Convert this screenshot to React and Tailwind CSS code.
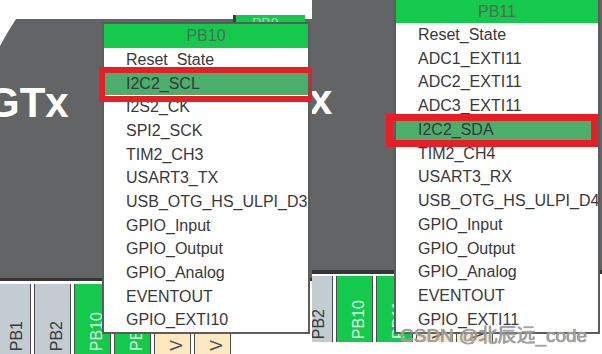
const leftItems = [
  "Reset_State",
  "I2C2_SCL",
  "I2S2_CK",
  "SPI2_SCK",
  "TIM2_CH3",
  "USART3_TX",
  "USB_OTG_HS_ULPI_D3",
  "GPIO_Input",
  "GPIO_Output",
  "GPIO_Analog",
  "EVENTOUT",
  "GPIO_EXTI10",
];

const rightItems = [
  "Reset_State",
  "ADC1_EXTI11",
  "ADC2_EXTI11",
  "ADC3_EXTI11",
  "I2C2_SDA",
  "TIM2_CH4",
  "USART3_RX",
  "USB_OTG_HS_ULPI_D4",
  "GPIO_Input",
  "GPIO_Output",
  "GPIO_Analog",
  "EVENTOUT",
  "GPIO_EXTI11",
];

const pinStyles = {
  gray: "bg-[#c3ccd1] text-[#3a3a3a]",
  green: "bg-[#14c94b] text-[#d9f7df]",
  beige: "bg-[#fce8c1] text-[#4a4a4a]",
};

const Pin = ({ label, kind }) => (
  <div
    className={`w-[37px] shrink-0 h-full border-x border-[#4a4a4a] flex flex-col justify-end items-center pl-2 pb-[3px] ${pinStyles[kind]}`}
  >
    <span className="[writing-mode:vertical-rl] rotate-180 text-[16px] leading-none">
      {label}
    </span>
  </div>
);

const Menu = ({ title, items, selected, rowH, headH, className }) => (
  <div
    className={`absolute bg-white border-2 border-[#5c5c5c] font-['Liberation_Sans',Arial,sans-serif] ${className}`}
  >
    <div
      className="bg-[#14c94b] text-[#4b6e55] text-[16px] flex items-center justify-center"
      style={{ height: headH }}
    >
      {title}
    </div>
    {items.map((it) => (
      <div
        key={it}
        className={`pl-[22px] text-[16px] text-[#383838] flex items-center whitespace-nowrap overflow-hidden ${
          it === selected ? "bg-[#4cae6c]" : ""
        }`}
        style={{ height: rowH }}
      >
        {it}
      </div>
    ))}
  </div>
);

export default function App() {
  return (
    <div className="w-[602px] h-[354px] flex bg-white overflow-hidden font-['Liberation_Sans',Arial,sans-serif]">
      {/* left screenshot */}
      <div className="relative w-[312px] h-[354px] shrink-0 overflow-hidden flex flex-col bg-white">
        <div className="h-[19px] shrink-0" />
        <div className="h-[262px] shrink-0 bg-[#626465] border-b-[3px] border-[#353535] overflow-hidden">
          <div className="mt-[63px] ml-[-13px] text-white font-bold text-[42px] leading-none">
            GTx
          </div>
        </div>
        <div className="h-[3px] shrink-0" />
        <div className="flex-1 flex gap-[3px] ml-[-6px]">
          <Pin label="PB1" kind="gray" />
          <Pin label="PB2" kind="gray" />
          <Pin label="PB10" kind="green" />
          <Pin label="PB11" kind="green" />
          <Pin label="V" kind="beige" />
          <Pin label="V" kind="beige" />
        </div>

        {/* top pin peeking behind menu */}
        <div className="absolute left-[233px] top-[15px] w-[72px] h-[12px] border-l-[3px] border-[#3a3a3a] bg-[#14c94b] text-[#8fe6a6] text-[14px] leading-none pl-4 pt-[1px]">
          PB9
        </div>
        {/* chip corner notch */}
        <svg className="absolute left-0 top-[19px]" width="17" height="28" viewBox="0 0 17 28">
          <path d="M0 0 H16 Q8 12 0 27 Z" fill="#ffffff" />
        </svg>

        <Menu
          title="PB10"
          items={leftItems}
          selected="I2C2_SCL"
          rowH={23.7}
          headH={24}
          className="left-[102px] top-[22px] w-[208px]"
        />
        <div className="absolute left-[99px] top-[67px] w-[216px] h-[35px] border-[6px] border-[#e61e26]" />
      </div>

      {/* right screenshot */}
      <div className="relative flex-1 h-[354px] overflow-hidden flex flex-col bg-white">
        <div className="h-[274px] shrink-0 bg-[#626465] border-b-[4px] border-[#353535] overflow-hidden">
          <div className="mt-[79px] ml-[-3px] text-white font-bold text-[42px] leading-none">
            x
          </div>
        </div>
        <div className="h-[2px] shrink-0" />
        <div className="h-[66px] shrink-0 flex gap-[3px] ml-[-16px]">
          <Pin label="PB2" kind="gray" />
          <Pin label="PB10" kind="green" />
          <Pin label="PB11" kind="green" />
          <Pin label="V" kind="beige" />
          <Pin label="V" kind="beige" />
        </div>

        <Menu
          title="PB11"
          items={rightItems}
          selected="I2C2_SDA"
          rowH={23.75}
          headH={23}
          className="left-[82px] top-[-2px] w-[206px]"
        />
        <div className="absolute left-[74px] top-[114px] w-[212px] h-[33px] border-[7px] border-[#e61e26]" />

        <div className="absolute left-[88px] top-[326px] text-[19px] leading-none whitespace-nowrap text-[#a3a3a3] font-['Liberation_Sans','Noto_Sans_CJK_SC',sans-serif] [text-shadow:0_0_1px_#555,0_0_2px_#fff]">
          CSDN @北辰远_code
        </div>
      </div>
    </div>
  );
}
